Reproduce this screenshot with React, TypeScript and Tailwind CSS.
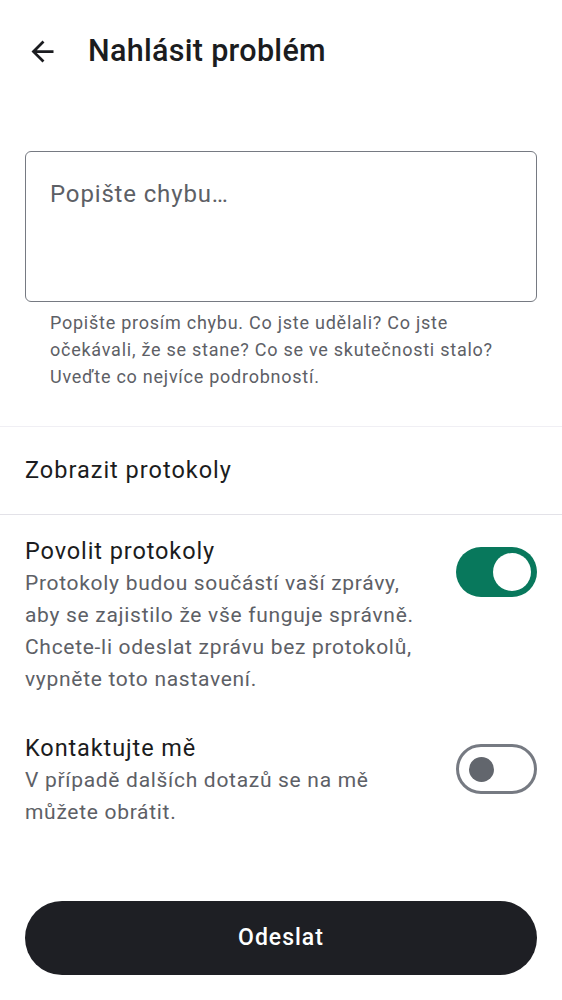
const Toggle = ({ on }: { on: boolean }) => {
  if (on) {
    return (
      <div className="flex h-[50px] w-[81px] shrink-0 items-center justify-end rounded-full bg-[#08785c] pr-[6px]">
        <div className="h-[38px] w-[38px] rounded-full bg-white" />
      </div>
    )
  }
  return (
    <div className="flex h-[50px] w-[81px] shrink-0 items-center rounded-full border-[3px] border-[#767a82] pl-[10px]">
      <div className="h-[25px] w-[25px] rounded-full bg-[#62666d]" />
    </div>
  )
}

const SettingRow = ({ title, desc, on }: any) => {
  return (
    <div className="flex items-start justify-between gap-4 px-[25px]">
      <div className="flex flex-col">
        <h2 className="text-[23.5px] leading-[32px] tracking-[0.9px] text-[#1b1c20]">{title}</h2>
        <p className="text-[21px] leading-[32px] tracking-[0.7px] text-[#5d6066]">{desc}</p>
      </div>
      <div className="pt-[12px]">
        <Toggle on={on} />
      </div>
    </div>
  )
}

export default function App() {
  return (
    <div
      className="flex h-[1000px] w-[562px] flex-col bg-white"
      style={{ fontFamily: 'Roboto, "Noto Sans", sans-serif' }}
    >
      <header className="flex h-[100px] items-center px-[26px] pt-[2px]">
        <svg width="33" height="33" viewBox="0 0 24 24" className="text-[#1b1c20]">
          <path d="M20 11H7.83l5.59-5.59L12 4l-8 8 8 8 1.41-1.41L7.83 13H20v-2z" fill="currentColor" />
        </svg>
        <h1 className="ml-[29px] text-[30.5px] font-medium tracking-[0.3px] text-[#1b1c20]">Nahlásit problém</h1>
      </header>

      <div className="px-[25px] pt-[51px]">
        <div className="h-[151px] rounded-[6px] border border-[#767a82] px-[24px] pt-[24px]">
          <span className="text-[24px] tracking-[0.85px] text-[#5d6066]">Popište chybu…</span>
        </div>
        <p className="px-[25px] pt-[7px] text-[18px] leading-[27px] tracking-[0.75px] text-[#5d6066]">
          Popište prosím chybu. Co jste udělali? Co jste očekávali, že se stane? Co se ve skutečnosti stalo? Uveďte co nejvíce podrobností.
        </p>
      </div>

      <div className="mt-[36px] h-[1px] bg-[#f0eff4]" />
      <div className="flex h-[87px] items-center px-[25px]">
        <span className="text-[23.5px] tracking-[1px] text-[#1b1c20]">Zobrazit protokoly</span>
      </div>
      <div className="h-[1px] bg-[#e3e2e8]" />

      <div className="flex flex-col gap-[37px] pt-[20px]">
        <SettingRow
          title="Povolit protokoly"
          desc="Protokoly budou součástí vaší zprávy, aby se zajistilo že vše funguje správně. Chcete-li odeslat zprávu bez protokolů, vypněte toto nastavení."
          on
        />
        <SettingRow
          title="Kontaktujte mě"
          desc="V případě dalších dotazů se na mě můžete obrátit."
          on={false}
        />
      </div>

      <div className="mt-auto px-[25px] pb-[25px]">
        <button className="flex h-[74px] w-full items-center justify-center rounded-full bg-[#1e1f24] text-[23px] font-medium tracking-[1px] text-white">
          Odeslat
        </button>
      </div>
    </div>
  )
}
